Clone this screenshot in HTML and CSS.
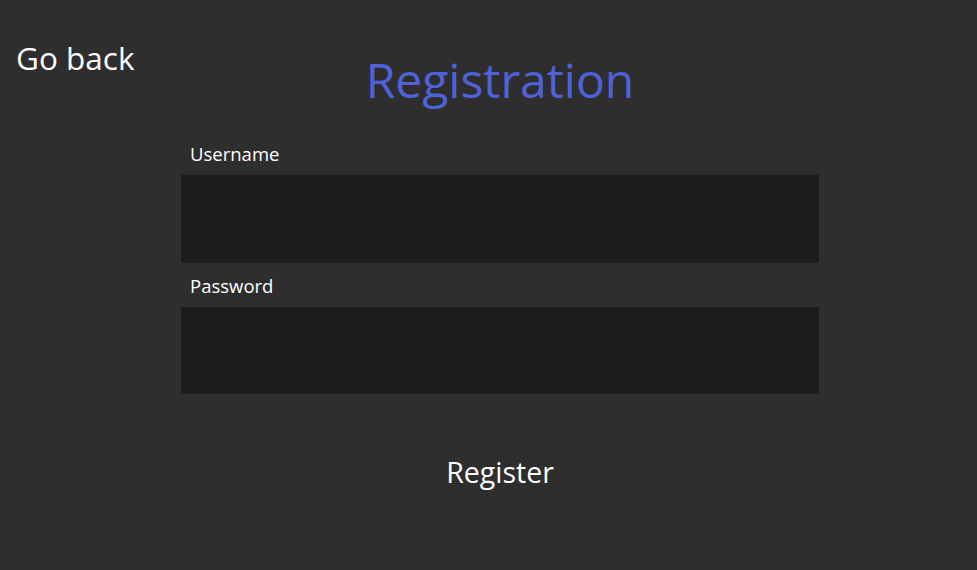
FILE: index.html
```html
<!DOCTYPE html>
<html>
<head>
<meta charset="utf-8">
<link rel="stylesheet" href="styles.css">
</head>
<body>
<div class="page">
  <div class="back">Go back</div>
  <h1 class="title">Registration</h1>
  <form class="form">
    <label class="label">Username</label>
    <div class="input"></div>
    <label class="label">Password</label>
    <div class="input"></div>
  </form>
  <div class="register">Register</div>
</div>
</body>
</html>
```
FILE: styles.css
```css
html, body {
  margin: 0;
  padding: 0;
  background: #2e2e2e;
  font-family: "Open Sans", "Noto Sans", sans-serif;
  color: #ffffff;
}
.page {
  position: relative;
  box-sizing: border-box;
  width: 977px;
  height: 570px;
  padding-left: 23px;
  display: flex;
  flex-direction: column;
  align-items: center;
}
.back {
  position: absolute;
  left: 16px;
  top: 37px;
  font-size: 31.5px;
  line-height: 42px;
}
.title {
  margin: 50px 0 0 0;
  font-weight: 400;
  font-size: 48px;
  line-height: 60px;
  color: #4f62d9;
}
.form {
  width: 638px;
  display: flex;
  flex-direction: column;
  margin-top: 21px;
}
.label {
  font-size: 18.5px;
  line-height: 24px;
  padding: 11px 0 9px 9px;
}
.input {
  height: 88px;
  background: #1c1c1c;
}
.input + .label {
  padding-top: 11px;
}
.input:last-child {
  height: 87px;
}
.register {
  margin-top: 58px;
  font-size: 28.5px;
  line-height: 40px;
}
```
